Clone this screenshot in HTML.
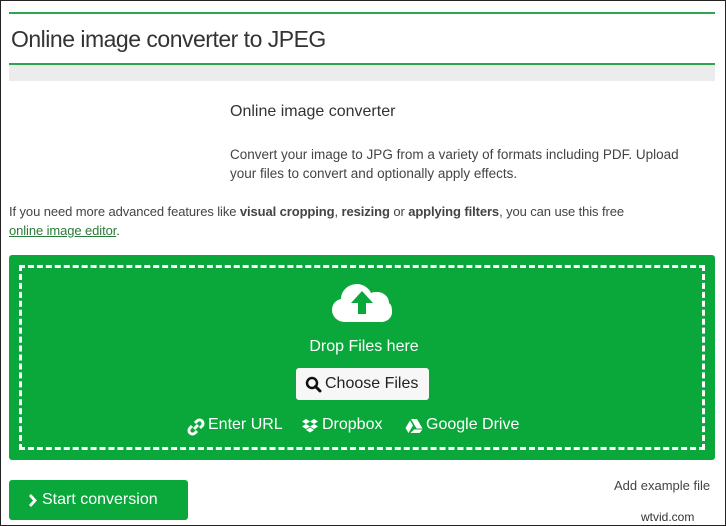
<!DOCTYPE html>
<html><head><style>
*{margin:0;padding:0;box-sizing:border-box}
body{width:726px;height:526px;background:#fff;font-family:"Liberation Sans",sans-serif;color:#333;position:relative;overflow:hidden;border:1px solid #222;}
.a{position:absolute}
</style></head><body>
<div class="a" style="left:8px;top:11px;width:706px;height:2px;background:#2ea44f"></div>
<div class="a" style="left:10px;top:25px;font-size:23px;color:#333;letter-spacing:-0.5px">Online image converter to JPEG</div>
<div class="a" style="left:8px;top:62px;width:706px;height:2px;background:#2ea44f"></div>
<div class="a" style="left:8px;top:64px;width:706px;height:16px;background:#ececec"></div>
<div class="a" style="left:229px;top:102px;font-size:16px">Online image converter</div>
<div class="a" style="left:229px;top:144px;font-size:13.5px;line-height:19px;width:470px;color:#444">Convert your image to JPG from a variety of formats including PDF. Upload your files to convert and optionally apply effects.</div>
<div class="a" style="left:8px;top:201px;font-size:13px;line-height:19px;width:710px;color:#444;letter-spacing:-0.1px">If you need more advanced features like <b>visual cropping</b>, <b>resizing</b> or <b>applying filters</b>, you can use this free<br><span style="text-decoration:underline;color:#2a7a3a">online image editor</span>.</div>
<div class="a" style="left:8px;top:254px;width:706px;height:205px;background:#0aa83a;border-radius:3px"></div>
<div class="a" style="left:18px;top:264px;width:686px;height:185px;border:3px dashed #fff"></div>
<svg class="a" style="left:330px;top:280px" width="62" height="42" viewBox="0 0 62 42"><path d="M14 41C6 41 1 35 1 29C1 23 5 19 10 18C10 10 17 3 26 3C32 3 38 7 40 12C42 11 44 11 46 11C53 11 58 16 58 22C61 24 61 28 61 31C61 37 56 41 50 41Z" fill="#fff"/><path d="M31 10L20 22H27V33H35V22H42Z" fill="#0aa83a"/></svg>
<div class="a" style="left:0;width:726px;top:337px;text-align:center;font-size:16px;color:#fff">Drop Files here</div>
<div class="a" style="left:295px;top:367px;width:133px;height:32px;background:#f7f7f7;border-radius:3px;font-size:16px;color:#222;line-height:32px;padding-left:29px">Choose Files</div>
<svg class="a" style="left:304px;top:375px" width="17" height="17" viewBox="0 0 17 17"><circle cx="7" cy="7" r="5" fill="none" stroke="#111" stroke-width="2.5"/><path d="M10.5 10.5L15 15" stroke="#111" stroke-width="3" stroke-linecap="round"/></svg>
<svg class="a" style="left:186px;top:417px" width="18" height="18" viewBox="0 0 18 18"><g fill="none" stroke="#fff" stroke-width="3"><path d="M8 5L10 3A3 3 0 0 1 15 8L13 10"/><path d="M10 13L8 15A3 3 0 0 1 3 10L5 8"/><path d="M7 11L11 7"/></g></svg>
<div class="a" style="left:207px;top:415px;font-size:16px;color:#fff">Enter URL</div>
<svg class="a" style="left:300px;top:417px" width="18" height="16" viewBox="0 0 18 16"><g fill="#fff"><path d="M5 1L1 3.5L5 6L9 3.5Z"/><path d="M13 1L9 3.5L13 6L17 3.5Z"/><path d="M5 6L1 8.5L5 11L9 8.5Z"/><path d="M13 6L9 8.5L13 11L17 8.5Z"/><path d="M5 12L9 14.5L13 12L9 9.5Z"/></g></svg>
<div class="a" style="left:321px;top:415px;font-size:16px;color:#fff">Dropbox</div>
<svg class="a" style="left:404px;top:417px" width="18" height="16" viewBox="0 0 18 16"><path d="M6 1H12L17.5 10.5H11.5ZM5 2.5L8 7.5L3.5 15L0.5 10ZM9 11.5H17.5L14.5 15H5.5Z" fill="#fff"/></svg>
<div class="a" style="left:425px;top:415px;font-size:16px;color:#fff">Google Drive</div>
<div class="a" style="left:8px;top:479px;width:179px;height:40px;background:#0aa83a;border-radius:3px;color:#fff;font-size:16px;line-height:40px;padding-left:33px">Start conversion</div>
<svg class="a" style="left:27px;top:492px" width="10" height="15" viewBox="0 0 10 15"><path d="M2 2L7 7.5L2 13" fill="none" stroke="#fff" stroke-width="2.8"/></svg>
<div class="a" style="left:613px;top:477px;font-size:13px;color:#444">Add example file</div>
<div class="a" style="left:640px;top:509px;font-size:12px;color:#333">wtvid.com</div>
</body></html>
